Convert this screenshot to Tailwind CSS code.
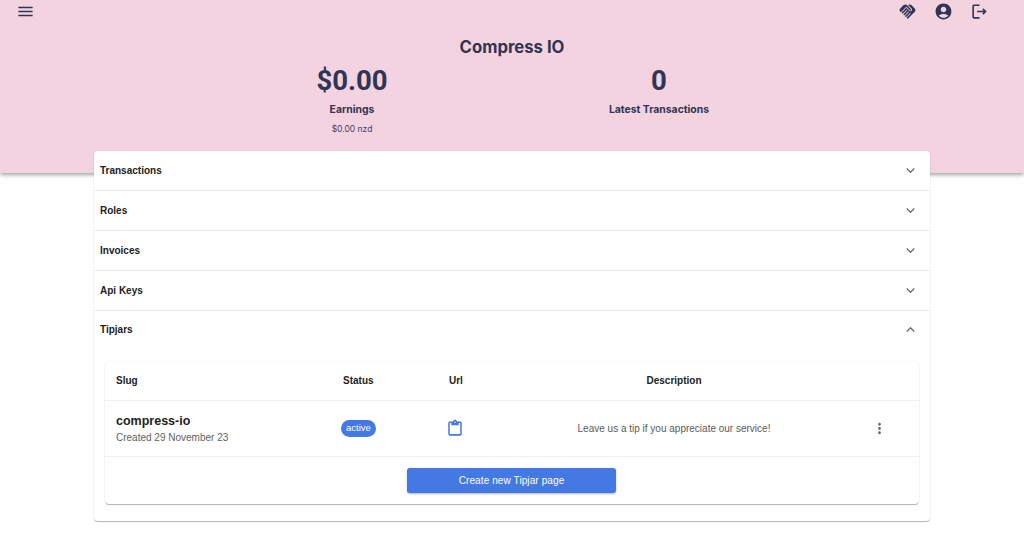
<!DOCTYPE html>
<html lang="en">
<head>
  <meta charset="UTF-8">
  <title>Compress IO</title>
  <script src="https://cdn.jsdelivr.net/npm/@tailwindcss/browser@4"></script>
</head>
<body class="bg-white h-[559px] overflow-hidden font-['Liberation_Sans',sans-serif]">
  <!-- Pink header -->
  <header class="h-[173px] bg-[#f4d3e1] text-[#303553] shadow-[0_2px_4px_rgba(0,0,0,0.35)]">
    <div class="flex items-center h-[22px] pl-[16px] pr-[35px]">
      <svg class="w-[19px] h-[19px]" viewBox="0 0 24 24" fill="currentColor"><path d="M3 18h18v-2H3v2zm0-5h18v-2H3v2zm0-7v2h18V6H3z"/></svg>
      <div class="ml-auto flex items-center gap-[17px]">
        <svg class="w-[19px] h-[19px]" viewBox="0 0 24 24" fill="currentColor"><path d="M16.480 10.410c-.390.390-1.040.390-1.430 0l-4.470-4.460-7.050 7.040-.660-.630c-1.170-1.170-1.170-3.070 0-4.240l4.240-4.240c1.170-1.170 3.070-1.170 4.240 0L16.480 9c.390.390.390 1.020 0 1.410zm.700-2.110c.780.780.780 2.050 0 2.830-1.270 1.270-2.610.220-2.830 0l-3.760-3.760-5.570 5.570c-.390.390-.390 1.020 0 1.410.390.390 1.020.390 1.420 0l4.620-4.620.710.710-4.620 4.620c-.390.390-.390 1.020 0 1.410.390.390 1.020.390 1.420 0l4.620-4.620.710.710-4.620 4.620c-.390.390-.390 1.020 0 1.410.390.390 1.020.390 1.410 0l4.620-4.620.710.710-4.620 4.620c-.390.390-.390 1.020 0 1.410.390.390 1.020.390 1.410 0l8.320-8.340c1.170-1.170 1.170-3.070 0-4.240l-4.240-4.240c-1.150-1.150-3.010-1.170-4.180-.060l4.440 4.470z"/></svg>
        <svg class="w-[19px] h-[19px]" viewBox="0 0 24 24" fill="currentColor"><path d="M12 2C6.480 2 2 6.480 2 12s4.480 10 10 10 10-4.480 10-10S17.520 2 12 2zm0 4c1.930 0 3.500 1.570 3.500 3.500S13.930 13 12 13s-3.500-1.570-3.500-3.500S10.070 6 12 6zm0 14c-2.030 0-4.430-.820-6.140-2.880C7.550 15.800 9.680 15 12 15s4.450.800 6.140 2.120C16.430 19.180 14.030 20 12 20z"/></svg>
        <svg class="w-[19px] h-[19px]" viewBox="0 0 24 24" fill="currentColor"><path d="M17 8l-1.410 1.410L17.170 11H9v2h8.170l-1.580 1.580L17 16l4-4-4-4zM5 5h7V3H5c-1.100 0-2 .900-2 2v14c0 1.100.900 2 2 2h7v-2H5V5z"/></svg>
      </div>
    </div>
    <h1 class="mt-[14px] text-center text-[16.7px] leading-[22px] font-bold font-['Inter',sans-serif]">Compress IO</h1>
    <div class="flex justify-center pr-[13px]">
      <div class="w-[307px] flex flex-col items-center">
        <div class="text-[27.5px] leading-[38px] mt-[4px] font-bold font-['Roboto',sans-serif]">$0.00</div>
        <div class="text-[10.4px] leading-[14px] mt-[3px] font-bold font-['Inter',sans-serif]">Earnings</div>
        <div class="text-[8.5px] leading-[12px] mt-[6px] font-['Inter',sans-serif] text-[#3f4263]">$0.00 nzd</div>
      </div>
      <div class="w-[307px] flex flex-col items-center">
        <div class="text-[27.5px] leading-[38px] mt-[4px] font-bold font-['Roboto',sans-serif]">0</div>
        <div class="text-[10.4px] leading-[14px] mt-[3px] font-bold font-['Inter',sans-serif]">Latest Transactions</div>
      </div>
    </div>
  </header>

  <!-- Accordion card -->
  <main class="relative mx-[94px] -mt-[22px] w-[836px] h-[370px] bg-white rounded-[4px] shadow-[0_1px_1px_rgba(0,0,0,0.28),0_0_2px_rgba(0,0,0,0.08)] text-[#222222]">
    <div class="flex items-center justify-between h-[40px] pl-[6px] pr-[11px] border-b border-[#e8e8e8]">
      <span class="text-[10px] font-bold">Transactions</span>
      <svg class="w-[17px] h-[17px] text-[#6f6f6f]" viewBox="0 0 24 24" fill="currentColor"><path d="M16.590 8.590 12 13.170 7.410 8.590 6 10l6 6 6-6z"/></svg>
    </div>
    <div class="flex items-center justify-between h-[40px] pl-[6px] pr-[11px] border-b border-[#e8e8e8]">
      <span class="text-[10px] font-bold">Roles</span>
      <svg class="w-[17px] h-[17px] text-[#6f6f6f]" viewBox="0 0 24 24" fill="currentColor"><path d="M16.590 8.590 12 13.170 7.410 8.590 6 10l6 6 6-6z"/></svg>
    </div>
    <div class="flex items-center justify-between h-[40px] pl-[6px] pr-[11px] pb-[1px] border-b border-[#e8e8e8]">
      <span class="text-[10px] font-bold">Invoices</span>
      <svg class="w-[17px] h-[17px] text-[#6f6f6f]" viewBox="0 0 24 24" fill="currentColor"><path d="M16.590 8.590 12 13.170 7.410 8.590 6 10l6 6 6-6z"/></svg>
    </div>
    <div class="flex items-center justify-between h-[40px] pl-[6px] pr-[11px] border-b border-[#e8e8e8]">
      <span class="text-[10px] font-bold">Api Keys</span>
      <svg class="w-[17px] h-[17px] text-[#6f6f6f]" viewBox="0 0 24 24" fill="currentColor"><path d="M16.590 8.590 12 13.170 7.410 8.590 6 10l6 6 6-6z"/></svg>
    </div>
    <div class="flex items-center justify-between h-[37px] pl-[6px] pr-[11px]">
      <span class="text-[10px] font-bold">Tipjars</span>
      <svg class="w-[17px] h-[17px] text-[#6f6f6f]" viewBox="0 0 24 24" fill="currentColor"><path d="M12 8l-6 6 1.410 1.410L12 10.830l4.590 4.580L18 14z"/></svg>
    </div>

    <!-- Tipjars table -->
    <div class="mx-[11px] mt-[13px] h-[143px] rounded-[4px] bg-white shadow-[0_1px_1px_rgba(0,0,0,0.3),0_0_2px_rgba(0,0,0,0.06)]">
      <div class="grid grid-cols-[227px_106px_62px_348px_1fr] items-center h-[40px] border-b border-[#f0f0f0] text-[10px] font-bold">
        <span class="pl-[11px]">Slug</span>
        <span class="pl-[11px]">Status</span>
        <span class="pl-[11px]">Url</span>
        <span class="text-center">Description</span>
        <span></span>
      </div>
      <div class="grid grid-cols-[227px_106px_62px_348px_1fr] items-center h-[56px] border-b border-[#f0f0f0]">
        <div class="pl-[11px]">
          <div class="text-[12.5px] leading-[16px] font-bold">compress-io</div>
          <div class="text-[10px] leading-[13px] mt-[2px] text-[#5f5f5f]">Created 29 November 23</div>
        </div>
        <div class="pl-[9px]">
          <span class="flex items-center w-fit h-[17px] px-[5px] rounded-full bg-[#4479e4] text-white text-[9.5px]">active</span>
        </div>
        <div class="pl-[8px]">
          <svg class="w-[18px] h-[19px] text-[#4479e4]" viewBox="0 0 24 24" fill="currentColor" preserveAspectRatio="none"><path d="M19 3h-4.180C14.400 1.840 13.300 1 12 1s-2.400.840-2.820 2H5c-1.100 0-2 .900-2 2v14c0 1.100.900 2 2 2h14c1.100 0 2-.900 2-2V5c0-1.100-.900-2-2-2zm-7 0c.550 0 1 .450 1 1s-.450 1-1 1-1-.450-1-1 .450-1 1-1zm7 16H5V5h2v3h10V5h2v14z"/></svg>
        </div>
        <div class="text-center text-[10px] text-[#5a5a5a]">Leave us a tip if you appreciate our service!</div>
        <div class="pl-[23px]">
          <svg class="w-[17px] h-[17px] text-[#6a6a6a]" viewBox="0 0 24 24" fill="currentColor"><path d="M12 8c1.100 0 2-.900 2-2s-.900-2-2-2-2 .900-2 2 .900 2 2 2zm0 2c-1.100 0-2 .900-2 2s.900 2 2 2 2-.900 2-2-.900-2-2-2zm0 6c-1.100 0-2 .900-2 2s.900 2 2 2 2-.900 2-2-.900-2-2-2z"/></svg>
        </div>
      </div>
      <div class="flex justify-center pt-[11px] pr-[1px]">
        <button class="w-[209px] h-[25px] rounded-[3px] bg-[#4479e4] text-white text-[10px] tracking-[0.1px] shadow-[0_1px_2px_rgba(0,0,0,0.3)]">Create new Tipjar page</button>
      </div>
    </div>
  </main>
</body>
</html>
